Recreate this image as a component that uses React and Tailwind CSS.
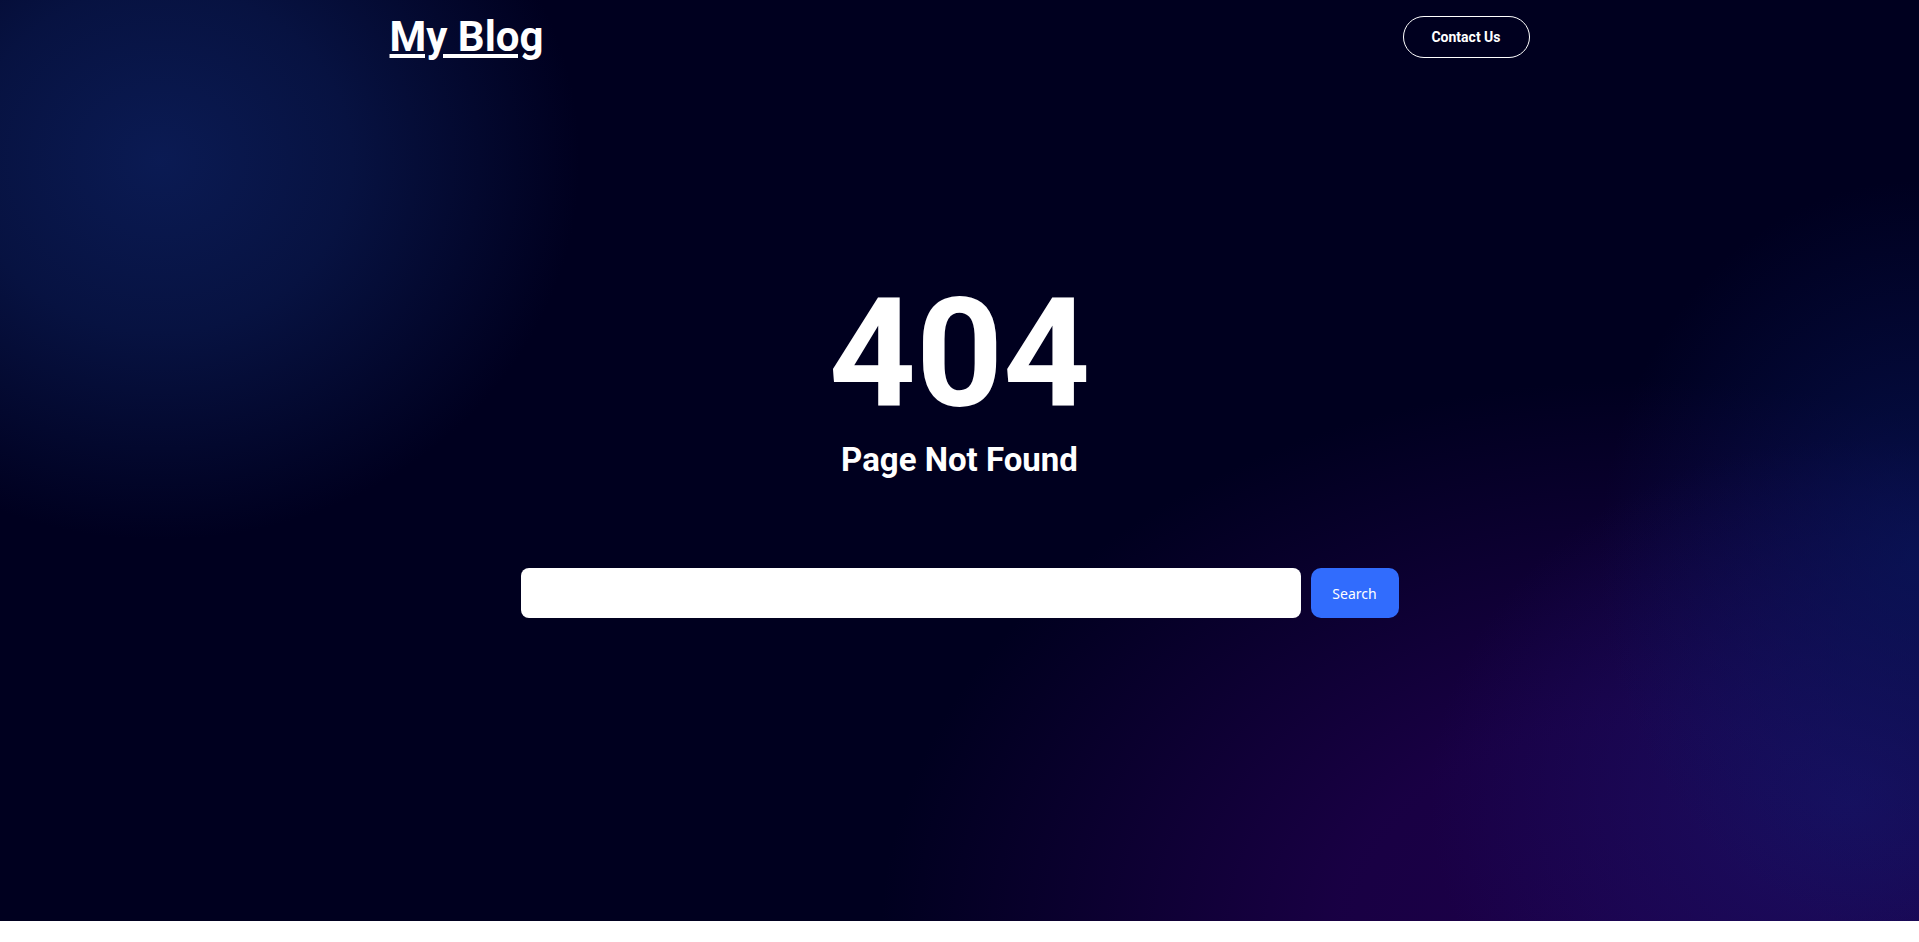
export default function App() {
  return (
    <div className="bg-white min-h-[942px]">
      <div className="h-[921px] bg-[#00001f] bg-[radial-gradient(ellipse_420px_380px_at_160px_160px,rgba(11,28,86,0.95)_0%,rgba(10,26,80,0.7)_45%,rgba(0,0,31,0)_100%),radial-gradient(ellipse_320px_380px_at_1919px_560px,rgba(8,22,90,0.75)_0%,rgba(0,0,31,0)_100%),radial-gradient(ellipse_420px_360px_at_1850px_800px,rgba(26,16,100,0.9)_0%,rgba(26,16,100,0)_100%),radial-gradient(ellipse_760px_560px_at_1640px_940px,rgba(29,0,74,1)_0%,rgba(29,0,74,0.85)_40%,rgba(0,0,31,0)_100%)] flex flex-col">
        <header className="w-[1140px] mx-auto h-[74px] flex items-center justify-between">
          <a href="#" className="text-white underline font-bold text-[42px] leading-none font-['Roboto',sans-serif]">My Blog</a>
          <button className="h-[42px] w-[127px] rounded-full border border-white text-white text-[14px] font-bold font-['Roboto',sans-serif]">Contact Us</button>
        </header>
        <main className="flex flex-col items-center">
          <h1 className="mt-[204px] text-white font-bold text-[152px] leading-none font-['Roboto',sans-serif]">404</h1>
          <h2 className="mt-[11px] text-white font-bold text-[33px] leading-[38px] font-['Roboto',sans-serif]">Page Not Found</h2>
          <div className="mt-[89px] flex gap-[10px]">
            <input type="text" className="w-[780px] h-[50px] rounded-[8px] bg-white outline-none px-3" />
            <button className="w-[88px] h-[50px] rounded-[10px] bg-[#316cfd] text-white text-[14px] font-['Noto_Sans',sans-serif]">Search</button>
          </div>
        </main>
      </div>
    </div>
  );
}
